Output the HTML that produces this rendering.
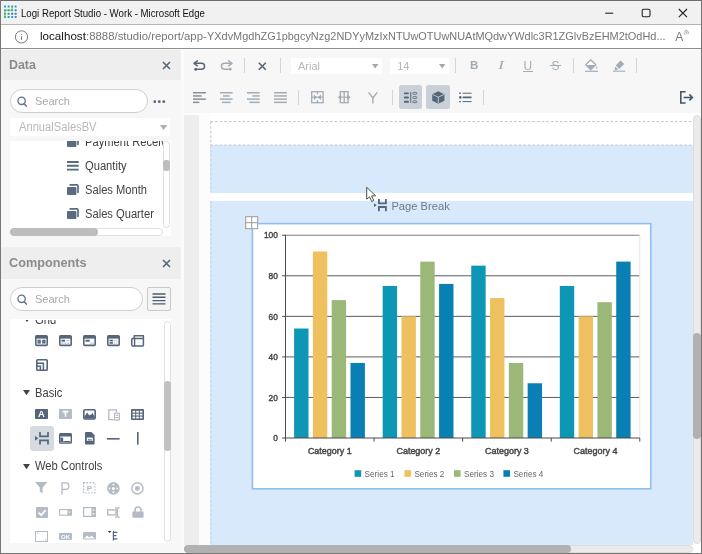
<!DOCTYPE html>
<html lang="en">
<head>
<meta charset="utf-8">
<title>Logi Report Studio - Work</title>
<style>
*{box-sizing:border-box;margin:0;padding:0}
html,body{width:702px;height:554px;overflow:hidden;background:#f7f7f7;font-family:"Liberation Sans",sans-serif;}
.a{position:absolute}
#win{position:absolute;left:0;top:0;width:702px;height:554px;overflow:hidden;will-change:transform}
.t{position:absolute;white-space:nowrap;line-height:1}
.tr{font-size:12px;color:#414141;transform-origin:0 0;transform:scaleX(.93)}
svg{position:absolute;overflow:visible}
</style>
</head>
<body>
<div id="win">
<!-- TITLE BAR -->
<div class="a" id="titlebar" style="left:0;top:0;width:702px;height:25px;background:#f1f1f1"></div>
<svg style="left:0;top:0" width="24" height="24" viewBox="0 0 24 24"><rect x="3.4" y="5" width="13.8" height="13.6" rx="2" fill="#e6f6fb"/><path d="M5.0 10.2H12.1M12.1 6.5V10.2M5.0 10.2V17.1" stroke="#8fd49a" stroke-width="1.4" fill="none"/><rect x="4.00" y="5.50" width="2" height="2" rx=".5" fill="#3f8fc6"/><rect x="7.60" y="5.50" width="2" height="2" rx=".5" fill="#3f8fc6"/><rect x="11.10" y="5.50" width="2" height="2" rx=".5" fill="#55a85e"/><rect x="14.60" y="5.50" width="2" height="2" rx=".5" fill="#3f8fc6"/><rect x="4.00" y="9.20" width="2" height="2" rx=".5" fill="#55a85e"/><rect x="7.60" y="9.20" width="2" height="2" rx=".5" fill="#55a85e"/><rect x="11.10" y="9.20" width="2" height="2" rx=".5" fill="#55a85e"/><rect x="14.60" y="9.20" width="2" height="2" rx=".5" fill="#517fa6"/><rect x="4.00" y="12.80" width="2" height="2" rx=".5" fill="#55a85e"/><rect x="7.60" y="12.80" width="2" height="2" rx=".5" fill="#3f8fc6"/><rect x="11.10" y="12.80" width="2" height="2" rx=".5" fill="#4a74b8"/><rect x="14.60" y="12.80" width="2" height="2" rx=".5" fill="#517fa6"/><rect x="4.00" y="16.10" width="2" height="2" rx=".5" fill="#55a85e"/><rect x="7.60" y="16.10" width="2" height="2" rx=".5" fill="#2f9a9a"/><rect x="11.10" y="16.10" width="2" height="2" rx=".5" fill="#3f8fc6"/><rect x="14.60" y="16.10" width="2" height="2" rx=".5" fill="#3f8fc6"/></svg>
<div class="t" id="ttl" style="left:21px;top:7.5px;font-size:10.5px;color:#111;transform-origin:0 0;transform:scaleX(.92)">Logi Report Studio - Work - Microsoft Edge</div>
<!-- window controls -->
<svg style="left:600px;top:0" width="102" height="25" viewBox="0 0 102 25">
<path d="M5.2 13.2h8" stroke="#222" stroke-width="1.1" fill="none"/>
<rect x="42.2" y="9.2" width="7.8" height="7.6" rx="1.5" stroke="#222" stroke-width="1.1" fill="none"/>
<path d="M78.800 9l8.200 8.200M87 9l-8.200 8.200" stroke="#222" stroke-width="1.1" fill="none"/>
</svg>
<!-- ADDRESS BAR -->
<div class="a" id="addr" style="left:0;top:24.2px;width:702px;height:24.6px;background:#fff;border-top:.9px solid #b4b4b4;border-bottom:1.1px solid #8e8e8e"></div>
<svg style="left:14px;top:30px" width="15" height="15" viewBox="0 0 15 15">
<circle cx="7.5" cy="6.900" r="6.100" stroke="#6a6a6a" stroke-width="0.9" fill="none"/>
<path d="M7.5 6.3v3.6" stroke="#777" stroke-width="1"/><circle cx="7.5" cy="4.5" r="0.6" fill="#777"/>
</svg>
<div class="t" id="u1" style="left:40px;top:31px;font-size:11.5px;color:#111;transform-origin:0 0;transform:scaleX(1.0110)">localhost</div>
<div class="t" id="u2" style="left:86.2px;top:31px;font-size:11.5px;color:#767676;transform-origin:0 0;transform:scaleX(0.9894)">:8888/studio/report/app-</div>
<div class="t" id="u3" style="left:207px;top:31px;font-size:11.5px;color:#767676;transform-origin:0 0;transform:scaleX(0.9503)">YXdvMgdhZG1pbgcyNzg2NDYyMzIxNTUwOTUwNUAtMQdwYWdlc3R1ZGlvBzEHM2tOdHd...</div>
<div class="t" style="left:675.2px;top:30.6px;font-size:12px;color:#7a7a7a">A</div>
<svg style="left:683px;top:30px" width="6" height="8" viewBox="0 0 6 8"><path d="M0.600 2.800q1.300 .4 1.500 1.800M1.400 1.200q2.400 .6 2.700 3M2.200 -0.200q3.300 .7 3.500 3.900" stroke="#7a7a7a" stroke-width=".7" fill="none"/></svg>
<!-- LEFT PANEL -->
<div class="a" id="left" style="left:1px;top:48.8px;width:179.5px;height:505px;background:#f7f7f7"></div>
<div class="a" style="left:1px;top:49.8px;width:179.5px;height:30.700px;background:#eeeeee;border-radius:3px 3px 0 0"></div>
<div class="t" id="hdata" style="left:9px;top:58px;font-size:13px;font-weight:bold;color:#8b8b8b;transform-origin:0 0;transform:scaleX(.955)">Data</div>
<svg style="left:162px;top:61px" width="9" height="9" viewBox="0 0 9 9"><path d="M1 1l7 7M8 1l-7 7" stroke="#55667a" stroke-width="1.6" fill="none"/></svg>
<div class="a" style="left:10px;top:89px;width:138px;height:24px;background:#fff;border:1px solid #cfcfcf;border-radius:12px"></div>
<svg style="left:17.4px;top:96px" width="11" height="12" viewBox="0 0 11 12"><circle cx="4.6" cy="4.8" r="3.7" stroke="#64748a" stroke-width="1.3" fill="none"/><path d="M7.2 7.700l2.100 2.400" stroke="#64748a" stroke-width="1.5" stroke-linecap="round"/></svg>
<div class="t" style="left:35px;top:96px;font-size:11px;color:#a9a9a9">Search</div>
<svg style="left:153px;top:100px" width="13" height="4" viewBox="0 0 13 4"><circle cx="1.8" cy="1.7" r="1.4" fill="#55667a"/><circle cx="6.3" cy="1.7" r="1.4" fill="#55667a"/><circle cx="10.8" cy="1.7" r="1.4" fill="#55667a"/></svg>
<div class="a" style="left:10.4px;top:118.2px;width:160px;height:18px;background:#fff"></div>
<div class="t" id="ddl" style="left:19px;top:121px;font-size:12px;color:#b9b9b9;transform-origin:0 0;transform:scaleX(.93)">AnnualSalesBV</div>
<svg style="left:159.6px;top:125px" width="8" height="5" viewBox="0 0 8 5"><path d="M0 0h7.2l-3.6 5z" fill="#a8b0b9"/></svg>
<!-- data tree -->
<div class="a" style="left:10.4px;top:141.2px;width:160.2px;height:95px;background:#fff;overflow:hidden">
  <div class="t tr" style="left:74.6px;top:-5.2px">Payment Received</div>
  <div class="t tr" style="left:74.6px;top:18.8px">Quantity</div>
  <div class="t tr" style="left:74.6px;top:42.8px">Sales Month</div>
  <div class="t tr" style="left:74.6px;top:66.8px">Sales Quarter</div>
  <svg style="left:56.6px;top:-4.800px" width="12" height="12" viewBox="0 0 12 12"><use href="#cube"/></svg>
  <svg style="left:56.6px;top:19.800px" width="12" height="11" viewBox="0 0 12 11"><path d="M0 1h11.700M0 4.800h11.700M0 8.600h11.700" stroke="#5a6b7f" stroke-width="1.900"/></svg>
  <svg style="left:56.6px;top:43px" width="12" height="12" viewBox="0 0 12 12"><use href="#cube"/></svg>
  <svg style="left:56.6px;top:67px" width="12" height="12" viewBox="0 0 12 12"><use href="#cube"/></svg>
  <!-- v scroll -->
  <div class="a" style="left:152.4px;top:0;width:8px;height:87px;background:#fff"></div>
  <div class="a" style="left:152.6px;top:0;width:7.4px;height:86.800px;background:#fff;border:1px solid #dedede;border-radius:4px"></div>
  <div class="a" style="left:152.6px;top:18.800px;width:7.4px;height:11px;background:#bdbdbd;border-radius:3px"></div>
  <!-- h scroll -->
  <div class="a" style="left:0;top:86.800px;width:152.600px;height:7.600px;background:#fff;border:1px solid #e1e1e1;border-radius:4px"></div>
  <div class="a" style="left:0;top:86.800px;width:87.600px;height:7.600px;background:#bdbdbd;border-radius:4px"></div>
</div>
<svg width="0" height="0" style="left:0;top:0"><defs><g id="cube"><path d="M3.200 0.900h6.800a1 1 0 0 1 1 1v6.400" stroke="#5a6b7f" stroke-width="1.700" fill="none" stroke-linecap="round"/><rect x="0" y="3" width="9.400" height="8" rx="1" fill="#5a6b7f"/></g></defs></svg>
<!-- COMPONENTS PANEL -->
<div class="a" style="left:1px;top:247.2px;width:179.5px;height:31.6px;background:#eeeeee;border-radius:3px 3px 0 0"></div>
<div class="t" id="hcomp" style="left:9px;top:256px;font-size:13px;font-weight:bold;color:#8b8b8b;transform-origin:0 0;transform:scaleX(.975)">Components</div>
<svg style="left:162px;top:259px" width="9" height="9" viewBox="0 0 9 9"><path d="M1 1l7 7M8 1l-7 7" stroke="#55667a" stroke-width="1.6" fill="none"/></svg>
<div class="a" style="left:10px;top:287px;width:133px;height:24px;background:#fff;border:1px solid #cfcfcf;border-radius:12px"></div>
<svg style="left:17.4px;top:294px" width="11" height="12" viewBox="0 0 11 12"><circle cx="4.6" cy="4.8" r="3.7" stroke="#64748a" stroke-width="1.3" fill="none"/><path d="M7.2 7.700l2.100 2.400" stroke="#64748a" stroke-width="1.5" stroke-linecap="round"/></svg>
<div class="t" style="left:35px;top:294px;font-size:11px;color:#a9a9a9">Search</div>
<div class="a" style="left:147px;top:287px;width:24px;height:24px;background:#f4f4f4;border:1px solid #c9c9c9;border-radius:2px"></div>
<svg style="left:152px;top:293px" width="14" height="12" viewBox="0 0 14 12"><path d="M0.5 1h13M0.5 4.3h13M0.5 7.6h13M0.5 10.9h13" stroke="#4c5c6e" stroke-width="1.4"/></svg>
<div class="a" style="left:10px;top:319.300px;width:161px;height:1.500px;background:#fff"></div>
<div class="a" id="ctree" style="left:10px;top:320px;width:161px;height:223px;background:#fff;overflow:hidden">
<div class="t tr" style="left:24.8px;top:-6px">Grid</div>
<svg style="left:14px;top:-1px" width="6" height="4" viewBox="0 0 6 4"><path d="M0 -1h6l-3 4z" fill="#444"/></svg>
<svg style="left:25px;top:15.2px" width="13" height="12" viewBox="0 0 13 12"><rect x="0.8" y="0.8" width="11.4" height="9.6" rx="0.9" fill="#fff" stroke="#55667a" stroke-width="1.6"/><rect x="0.8" y="0.8" width="11.4" height="2.8" fill="#55667a"/><rect x="2.5" y="4.700" width="3.3" height="3.900" fill="#55667a"/><rect x="7.200" y="4.700" width="3.300" height="3.900" fill="#55667a"/><path d="M2.500 6.650h8" stroke="#8d98a5" stroke-width=".5"/></svg>
<svg style="left:49px;top:15.2px" width="13" height="12" viewBox="0 0 13 12"><rect x="0.8" y="0.8" width="11.4" height="9.6" rx="0.9" fill="#fff" stroke="#55667a" stroke-width="1.6"/><rect x="0.8" y="0.8" width="11.4" height="2.8" fill="#55667a"/><rect x="2.5" y="4.700" width="3.600" height="2" fill="#55667a"/><rect x="7.400" y="5.200" width="3" height="1" fill="#b3bbc4"/><rect x="2.500" y="7.600" width="2" height="1.200" fill="#b3bbc4"/><rect x="5.400" y="7.600" width="2" height="1.200" fill="#b3bbc4"/><rect x="8.400" y="7.600" width="2" height="1.200" fill="#b3bbc4"/></svg>
<svg style="left:73px;top:15.2px" width="13" height="12" viewBox="0 0 13 12"><rect x="0.8" y="0.8" width="11.4" height="9.6" rx="0.9" fill="#fff" stroke="#55667a" stroke-width="1.6"/><rect x="0.8" y="0.8" width="11.4" height="2.8" fill="#55667a"/><rect x="2.5" y="4.700" width="4.200" height="2" fill="#55667a"/><rect x="7.400" y="7.400" width="1.200" height="1.400" fill="#b3bbc4"/><rect x="9.400" y="7.400" width="1.200" height="1.400" fill="#b3bbc4"/></svg>
<svg style="left:97px;top:15.2px" width="13" height="12" viewBox="0 0 13 12"><rect x="0.8" y="0.8" width="11.4" height="9.6" rx="0.9" fill="#fff" stroke="#55667a" stroke-width="1.6"/><rect x="0.8" y="0.8" width="11.4" height="2.8" fill="#55667a"/><rect x="2.5" y="4.700" width="3.400" height="1.700" fill="#55667a"/><rect x="2.500" y="7.100" width="3.400" height="1.700" fill="#55667a"/><rect x="7.200" y="5" width="1.200" height="1.100" fill="#b3bbc4"/><rect x="9.200" y="5" width="1.200" height="1.100" fill="#b3bbc4"/><rect x="7.200" y="7.400" width="1.200" height="1.100" fill="#b3bbc4"/><rect x="9.200" y="7.400" width="1.200" height="1.100" fill="#b3bbc4"/></svg>
<svg style="left:121px;top:15px" width="13" height="12" viewBox="0 0 13 12"><rect x="0.800" y="3.500" width="11.600" height="7.400" rx="0.800" fill="#fff" stroke="#55667a" stroke-width="1.500"/><path d="M3.200 3.500V0.800h9.200V3.500" stroke="#55667a" stroke-width="1.500" fill="none" stroke-linejoin="round"/><path d="M3.600 3.500v7.400" stroke="#55667a" stroke-width="1.400"/></svg>
<svg style="left:26px;top:39px" width="12" height="12" viewBox="0 0 12 12"><rect x="0.800" y="0.800" width="10.400" height="10.400" rx="0.800" fill="#fff" stroke="#55667a" stroke-width="1.600"/><path d="M1 4.200H7.400V11" stroke="#55667a" stroke-width="1.500" fill="none"/><path d="M1 7.300H4.400V11" stroke="#55667a" stroke-width="1.500" fill="none"/></svg>
<svg style="left:13.4px;top:70.3px" width="7" height="6" viewBox="0 0 7 6"><path d="M0 0h7l-3.5 5.2z" fill="#444"/></svg>
<div class="t tr" style="left:24.8px;top:67px">Basic</div>
<svg style="left:25px;top:89.4px" width="13" height="10" viewBox="0 0 13 10"><rect x="0" y="0" width="13" height="10" rx="0.8" fill="#55667a"/><text x="6.5" y="8.4" font-family="Liberation Sans,sans-serif" font-weight="bold" font-size="9.4" fill="#fff" text-anchor="middle">A</text></svg>
<svg style="left:49px;top:89.4px" width="13" height="10" viewBox="0 0 13 10"><rect x="0" y="0" width="13" height="10" rx="0.8" fill="#b3bbc4"/><path d="M3.6 2.6h5.8M6.5 2.6v5.2" stroke="#fff" stroke-width="1.6" fill="none"/></svg>
<svg style="left:73px;top:89.2px" width="13" height="11" viewBox="0 0 13 11"><rect x="0.8" y="0.8" width="11.4" height="9.2" rx="1.2" fill="#fff" stroke="#55667a" stroke-width="1.6"/><path d="M1.400 9.600V7.400L4.200 3.600l2 3 1-1.200.8.800 1.200-2.400 2.400 3.600v2.200z" fill="#55667a"/></svg>
<svg style="left:97.5px;top:88.6px" width="12" height="12" viewBox="0 0 12 12"><path d="M8.4 3V0.8H0.8v9.8h5" stroke="#b3bbc4" stroke-width="1.3" fill="none"/><rect x="6.6" y="4.2" width="4.8" height="7" rx="0.8" fill="#fff" stroke="#b3bbc4" stroke-width="1.2"/><path d="M7.6 6.2h2.8M7.6 8.6h2.8" stroke="#b3bbc4" stroke-width="1.1"/></svg>
<svg style="left:121px;top:89.2px" width="13" height="11" viewBox="0 0 13 11"><rect x="0" y="0" width="13" height="11" rx="1" fill="#55667a"/><g fill="#fff"><rect x="1.6" y="1.8" width="2.6" height="1.8"/><rect x="5.2" y="1.8" width="2.6" height="1.8"/><rect x="8.8" y="1.8" width="2.6" height="1.8"/><rect x="1.6" y="4.7" width="2.6" height="1.8"/><rect x="5.2" y="4.7" width="2.6" height="1.8"/><rect x="8.8" y="4.7" width="2.6" height="1.8"/><rect x="1.6" y="7.6" width="2.6" height="1.8"/><rect x="5.2" y="7.6" width="2.6" height="1.8"/><rect x="8.8" y="7.6" width="2.6" height="1.8"/></g></svg>
<div class="a" style="left:19.6px;top:106.4px;width:24px;height:24.4px;background:#d6dbe1;border-radius:3px"></div>
<svg style="left:24.8px;top:112px" width="14" height="13" viewBox="0 0 14 13"><path d="M0 3.900l3.400 2.400-3.400 2.400z" fill="#55667a"/><path d="M5 0v4.300h8V0M5 12.600V8.300h8v4.300" stroke="#55667a" stroke-width="1.7" fill="none"/></svg>
<svg style="left:49px;top:112.8px" width="13" height="11" viewBox="0 0 13 11"><rect x="0.7" y="0.7" width="11.6" height="9.4" rx="0.8" fill="#fff" stroke="#55667a" stroke-width="1.4"/><rect x="0.7" y="0.7" width="11.6" height="2.800" fill="#55667a"/><rect x="1.400" y="4.600" width="2.800" height="4.800" fill="#55667a"/><path d="M4.400 8.700h7" stroke="#55667a" stroke-width="1.400"/></svg>
<svg style="left:75px;top:112px" width="10" height="13" viewBox="0 0 10 13"><path d="M0 1a1 1 0 0 1 1-1h5.4L9.6 3.2V11.6a1 1 0 0 1-1 1H1a1 1 0 0 1-1-1z" fill="#55667a"/><rect x="1.8" y="5.6" width="6" height="3.4" fill="#fff"/><path d="M2.4 8.6l1.4-1.8 1.2 1 1-.8 1.4 1.6z" fill="#55667a"/></svg>
<svg style="left:97.2px;top:117.5px" width="13" height="2" viewBox="0 0 13 2"><rect x="0" y="0" width="12.6" height="1.6" fill="#55667a"/></svg>
<svg style="left:126.7px;top:112px" width="2" height="13" viewBox="0 0 2 13"><rect x="0" y="0" width="1.6" height="12.6" fill="#55667a"/></svg>
<svg style="left:13.4px;top:143.6px" width="7" height="6" viewBox="0 0 7 6"><path d="M0 0h7l-3.5 5.2z" fill="#444"/></svg>
<div class="t tr" style="left:24.8px;top:140px">Web Controls</div>
<svg style="left:25.4px;top:162.4px" width="13" height="12" viewBox="0 0 13 12"><path d="M0 0h12.4L7.6 5.4v5.8L4.8 9.4V5.4z" fill="#b3bbc4"/></svg>
<svg style="left:51px;top:161.5px" width="10" height="13" viewBox="0 0 10 13"><path d="M1 12.6V0.8h3.6a3.3 3.3 0 0 1 0 6.6H1" stroke="#b3bbc4" stroke-width="1.3" fill="none"/></svg>
<svg style="left:73.4px;top:162px" width="13" height="12" viewBox="0 0 13 12"><rect x="0.6" y="0.6" width="11.4" height="10.4" fill="none" stroke="#b3bbc4" stroke-width="1.1" stroke-dasharray="1.6 1.4"/><text x="6.4" y="9" font-family="Liberation Sans,sans-serif" font-weight="bold" font-size="8" fill="#b3bbc4" text-anchor="middle">P</text></svg>
<svg style="left:97.2px;top:161.6px" width="13" height="13" viewBox="0 0 13 13"><circle cx="6.4" cy="6.4" r="6.3" fill="#b3bbc4"/><circle cx="6.4" cy="6.4" r="1.5" fill="#fff"/><path d="M6.4 1.400l1.500 1.800H4.900zM6.400 11.400l1.500-1.800H4.900zM1.400 6.400l1.800-1.500v3zM11.400 6.400l-1.800-1.500v3z" fill="#fff"/></svg>
<svg style="left:121.2px;top:161.6px" width="13" height="13" viewBox="0 0 13 13"><circle cx="6.4" cy="6.4" r="5.6" fill="#fff" stroke="#b3bbc4" stroke-width="1.4"/><circle cx="6.4" cy="6.4" r="2.4" fill="#b3bbc4"/></svg>
<svg style="left:25.6px;top:187px" width="12" height="11" viewBox="0 0 12 11"><rect x="0" y="0" width="12" height="11" rx="1" fill="#b3bbc4"/><path d="M2.6 5.6l2.6 2.6 4.6-5" stroke="#fff" stroke-width="1.8" fill="none"/></svg>
<svg style="left:49px;top:188.6px" width="13" height="7" viewBox="0 0 13 7"><rect x="0.6" y="0.6" width="11.8" height="5.6" fill="#fff" stroke="#b3bbc4" stroke-width="1.1"/><rect x="8.4" y="0.6" width="4" height="5.6" fill="#b3bbc4"/><path d="M9.4 2.6h2l-1 1.6z" fill="#fff"/></svg>
<svg style="left:73.2px;top:187.4px" width="13" height="10" viewBox="0 0 13 10"><rect x="0.6" y="0.6" width="11.8" height="8.8" fill="#fff" stroke="#b3bbc4" stroke-width="1.2"/><rect x="8.4" y="0.6" width="4" height="8.8" fill="#b3bbc4"/><path d="M9.6 3h1.8M9.6 6.8h1.8" stroke="#fff" stroke-width="1.2"/></svg>
<svg style="left:97.2px;top:187px" width="13" height="11" viewBox="0 0 13 11"><rect x="0.7" y="2.900" width="8.400" height="5" fill="#fff" stroke="#b3bbc4" stroke-width="1.400"/><path d="M8.200 0.700h1.600M11 0.700h1.600M10.400 0.700v9.600M8.200 10.300h1.600M11 10.300h1.600" stroke="#b3bbc4" stroke-width="1.400" fill="none"/></svg>
<svg style="left:122px;top:186.4px" width="12" height="12" viewBox="0 0 12 12"><path d="M3 6V4a3 3 0 0 1 6 0v2" stroke="#b3bbc4" stroke-width="1.6" fill="none"/><rect x="0.4" y="5.6" width="11.2" height="6.2" rx="0.8" fill="#b3bbc4"/></svg>
<svg style="left:25px;top:211px" width="13" height="11" viewBox="0 0 13 11"><rect x="0.5" y="0.5" width="12" height="10" fill="#fff" stroke="#b3bbc4" stroke-width="1"/><path d="M2 2.2h1.4M10 8.8h1.4" stroke="#b3bbc4" stroke-width="1"/></svg>
<svg style="left:49px;top:212.6px" width="13" height="7" viewBox="0 0 13 7"><rect x="0" y="0" width="13" height="7" rx="1" fill="#b3bbc4"/><text x="6.5" y="5.8" font-family="Liberation Sans,sans-serif" font-weight="bold" font-size="6" fill="#fff" text-anchor="middle">OK</text></svg>
<svg style="left:73px;top:212.4px" width="13" height="8" viewBox="0 0 13 8"><rect x="0" y="0" width="13" height="7.6" rx="0.8" fill="#b3bbc4"/><path d="M1 6.4l3-3 2.4 2 2-1.6 3.6 2.6z" fill="#fff"/></svg>
<svg style="left:97.8px;top:211.4px" width="10" height="10" viewBox="0 0 10 10"><path d="M0 0h3.4l-1.7 2z" fill="#333"/><path d="M5.4 0v9.4M5.4 1.4h4M5.4 4.6h3M5.4 7.8h4" stroke="#55667a" stroke-width="1.2" fill="none"/></svg>
<div class="a" style="left:153.5px;top:1px;width:7.5px;height:221px;background:#fff;border:1px solid #e1e1e1;border-radius:4px"></div>
<div class="a" style="left:153.5px;top:60.8px;width:7.5px;height:70px;background:#c1c1c1;border-radius:4px"></div>
</div>
<!-- TOOLBAR -->
<div class="a" style="left:180.5px;top:48.8px;width:3px;height:505px;background:#fbfbfb"></div>
<div class="a" style="left:183.5px;top:48.8px;width:518.5px;height:3px;background:#fafafa"></div>
<div class="a" id="toolbar" style="left:183.5px;top:50.6px;width:518.5px;height:61.9px;background:#f7f7f7;border-radius:3px 0 0 0"></div>
<svg style="left:192.8px;top:59.8px" width="13" height="12" viewBox="0 0 13 12"><path d="M4.4 0.8L1 3.300l3.400 2.500" stroke="#55667a" stroke-width="1.5" fill="none" stroke-linejoin="round" stroke-linecap="round"/><path d="M1.2 3.3H8.6a2.950 2.950 0 0 1 0 5.900H4.2" stroke="#55667a" stroke-width="1.5" fill="none"/><circle cx="2.800" cy="9.200" r="1.5" fill="#55667a"/></svg>
<svg style="left:220px;top:59.8px;transform:scaleX(-1)" width="13" height="12" viewBox="0 0 13 12"><path d="M4.4 0.8L1 3.300l3.400 2.500" stroke="#a3acb6" stroke-width="1.5" fill="none" stroke-linejoin="round" stroke-linecap="round"/><path d="M1.2 3.3H8.6a2.950 2.950 0 0 1 0 5.900H4.2" stroke="#a3acb6" stroke-width="1.5" fill="none"/><circle cx="2.800" cy="9.200" r="1.4" fill="#a3acb6"/></svg>
<div class="a" style="left:244px;top:58px;width:1px;height:15px;background:#d4d4d4"></div>
<svg style="left:258.4px;top:61.6px" width="9" height="9" viewBox="0 0 9 9"><path d="M0.8 0.8l7 7M7.8 0.8l-7 7" stroke="#55667a" stroke-width="1.6" fill="none"/></svg>
<div class="a" style="left:280px;top:58px;width:1px;height:15px;background:#d4d4d4"></div>
<div class="a" style="left:290.8px;top:57.5px;width:91px;height:16.5px;background:#fff"></div>
<div class="t" id="tarial" style="left:298px;top:60.6px;font-size:11px;color:#b7b7b7">Arial</div>
<svg style="left:371.5px;top:64.2px" width="7" height="5" viewBox="0 0 7 5"><path d="M0 0h6.4l-3.2 4.4z" fill="#a0a8b2"/></svg>
<div class="a" style="left:390px;top:57.5px;width:59.4px;height:16.5px;background:#fff"></div>
<div class="t" id="t14" style="left:397.2px;top:60.6px;font-size:11px;color:#b7b7b7">14</div>
<svg style="left:438.8px;top:64.2px" width="7" height="5" viewBox="0 0 7 5"><path d="M0 0h6.4l-3.2 4.4z" fill="#a0a8b2"/></svg>
<div class="a" style="left:455px;top:58px;width:1px;height:15px;background:#d4d4d4"></div>
<div class="t" style="left:470px;top:60px;font-size:11.5px;font-weight:bold;color:#a3acb6">B</div>
<div class="t" style="left:497.6px;top:59.2px;font-size:12.5px;font-style:italic;font-family:'Liberation Serif',serif;color:#a3acb6;transform-origin:0 0;transform:scaleX(1.45)">I</div>
<div class="t" style="left:523.6px;top:60px;font-size:12px;color:#a3acb6">U</div>
<div class="a" style="left:523.4px;top:71.4px;width:9.4px;height:1px;background:#a3acb6"></div>
<div class="t" style="left:551.6px;top:60px;font-size:12px;color:#a3acb6">S</div>
<div class="a" style="left:550px;top:65.4px;width:11.4px;height:1px;background:#a3acb6"></div>
<div class="a" style="left:573px;top:58px;width:1px;height:15px;background:#d4d4d4"></div>
<svg style="left:585px;top:59px" width="13" height="13" viewBox="0 0 13 13"><path d="M5.800 0.700L0.800 5.700 5.800 10.700 10.800 5.700z" fill="#fff" stroke="#a3acb6" stroke-width="1.300" stroke-linejoin="round"/><path d="M1.200 5.900h9.200L5.800 10.600z" fill="#a3acb6"/><path d="M11.800 7q1.500 2 0 3q-1.500-1 0-3z" fill="#a3acb6"/><path d="M0 12.300h13" stroke="#a3acb6" stroke-width="1.200"/></svg>
<svg style="left:612.6px;top:59.6px" width="13" height="12" viewBox="0 0 13 12"><path d="M7.6 0.6l3.6 3.4-5 5-3.4-3.4z" fill="#a3acb6"/><path d="M2.2 6.4l3 3-3.6 1z" fill="#a3acb6"/><path d="M0 11.200h12.200" stroke="#a3acb6" stroke-width="1.1"/></svg>
<div class="a" style="left:636px;top:58px;width:1px;height:15px;background:#d4d4d4"></div>
<svg style="left:192.8px;top:91.8px" width="13" height="11" viewBox="0 0 13 11"><rect x="0" y="0" width="12.9" height="1.5" fill="#85909c"/><rect x="0" y="3.2" width="8.6" height="1.5" fill="#85909c"/><rect x="0" y="6.4" width="12.9" height="1.5" fill="#85909c"/><rect x="0" y="9.6" width="6.3" height="1.5" fill="#85909c"/></svg>
<svg style="left:220.3px;top:91.8px" width="13" height="11" viewBox="0 0 13 11"><rect x="0" y="0" width="12.6" height="1.5" fill="#a3acb6"/><rect x="3" y="3.2" width="6.6" height="1.5" fill="#a3acb6"/><rect x="0" y="6.4" width="12.6" height="1.5" fill="#a3acb6"/><rect x="2" y="9.6" width="8.6" height="1.5" fill="#a3acb6"/></svg>
<svg style="left:247.2px;top:91.8px" width="13" height="11" viewBox="0 0 13 11"><rect x="0" y="0" width="12.7" height="1.5" fill="#a3acb6"/><rect x="5.4" y="3.2" width="7.3" height="1.5" fill="#a3acb6"/><rect x="0" y="6.4" width="12.7" height="1.5" fill="#a3acb6"/><rect x="2.4" y="9.6" width="10.3" height="1.5" fill="#a3acb6"/></svg>
<svg style="left:274.3px;top:91.8px" width="13" height="11" viewBox="0 0 13 11"><rect x="0" y="0" width="12.9" height="1.5" fill="#a3acb6"/><rect x="0" y="3.2" width="12.9" height="1.5" fill="#a3acb6"/><rect x="0" y="6.4" width="12.9" height="1.5" fill="#a3acb6"/><rect x="0" y="9.6" width="12.9" height="1.5" fill="#a3acb6"/></svg>
<div class="a" style="left:298px;top:90px;width:1px;height:15px;background:#d4d4d4"></div>
<svg style="left:310.5px;top:91px" width="13" height="13" viewBox="0 0 13 13"><rect x="0.700" y="0.700" width="11.400" height="11" fill="none" stroke="#a3acb6" stroke-width="1.300"/><path d="M6.400 0.700v2.600M6.400 9.100v2.600" stroke="#a3acb6" stroke-width="1.300"/><path d="M1 6.200h11" stroke="#a3acb6" stroke-width="1.100"/><path d="M6.200 6.200L2.800 3.400v5.600zM6.600 6.200l3.400-2.800v5.600z" fill="#a3acb6"/></svg>
<svg style="left:338.2px;top:91px" width="13" height="13" viewBox="0 0 13 13"><rect x="2.300" y="0.700" width="7.800" height="11" fill="none" stroke="#a3acb6" stroke-width="1.300"/><path d="M6.200 0.700v11" stroke="#a3acb6" stroke-width="1.300"/><path d="M2 6.200h8.400" stroke="#a3acb6" stroke-width="1.100"/><path d="M-0.200 6.200l3.400-2.900v5.800zM12.600 6.200l-3.400-2.900v5.800z" fill="#a3acb6"/></svg>
<svg style="left:368.2px;top:92px" width="10" height="12" viewBox="0 0 10 12"><path d="M0.6 0.4L4.9 6 9.2 0.4M4.9 5.6v5.8" stroke="#a3acb6" stroke-width="1.4" fill="none"/></svg>
<div class="a" style="left:392px;top:90px;width:1px;height:15px;background:#d4d4d4"></div>
<div class="a" style="left:399.1px;top:85.4px;width:23.2px;height:23.2px;background:#cad0d7;border-radius:2.5px"></div>
<div class="a" style="left:426.2px;top:85.4px;width:23.4px;height:23.2px;background:#cad0d7;border-radius:2.5px"></div>
<svg style="left:404px;top:92px" width="13" height="11" viewBox="0 0 13 11"><rect x="0" y="0.4" width="4.8" height="1.9" rx=".5" fill="#55667a"/><rect x="0" y="4.6" width="4.8" height="1.9" rx=".5" fill="#55667a"/><rect x="0" y="8.8" width="4.8" height="1.9" rx=".5" fill="#55667a"/><path d="M6.8 0v11" stroke="#55667a" stroke-width="1"/><rect x="8.8" y="0.4" width="4" height="1.9" rx=".8" fill="none" stroke="#55667a" stroke-width=".8"/><rect x="8.8" y="4.6" width="4" height="1.9" rx=".8" fill="none" stroke="#55667a" stroke-width=".8"/><rect x="8.8" y="8.8" width="4" height="1.9" rx=".8" fill="none" stroke="#55667a" stroke-width=".8"/></svg>
<svg style="left:431.6px;top:90.8px" width="13" height="13" viewBox="0 0 13 13"><path d="M6.3 0.2L12.4 3.2v6.6L6.3 12.8 0.2 9.800V3.2z" fill="#55667a"/><path d="M0.6 3.4l5.7 2.8 5.7-2.8M6.3 6.2v6.4" stroke="#cad0d7" stroke-width=".9" fill="none"/></svg>
<svg style="left:459px;top:92px" width="13" height="11" viewBox="0 0 13 11"><circle cx="1" cy="1.2" r="0.9" fill="#55667a"/><rect x="3.6" y="0.7" width="9" height="1" fill="#55667a"/><circle cx="1.3" cy="5.4" r="1.3" fill="#55667a"/><rect x="3.6" y="4.5" width="9" height="1.8" rx=".5" fill="#55667a"/><circle cx="1" cy="9.6" r="0.9" fill="#55667a"/><rect x="3.6" y="9.1" width="9" height="1" fill="#55667a"/></svg>
<div class="a" style="left:483px;top:90px;width:1px;height:15px;background:#d4d4d4"></div>
<svg style="left:680.2px;top:90.8px" width="14" height="13" viewBox="0 0 14 13"><path d="M5.6 0.8H0.8v11.2h4.8" stroke="#45566a" stroke-width="1.6" fill="none"/><path d="M3.6 6.4h8.6M9.4 3.4l3 3-3 3" stroke="#45566a" stroke-width="1.5" fill="none"/></svg>
<!-- CANVAS -->
<div class="a" id="canvas" style="left:183.5px;top:112.5px;width:510px;height:432.5px;background:#fcfcfc;overflow:hidden"></div>
<div class="a" style="left:183.5px;top:115px;width:15.8px;height:430px;background:#ededed"></div>
<div class="a" style="left:210.4px;top:112.5px;width:483px;height:33px;background:#fff"></div>
<div class="a" style="left:210.4px;top:145.2px;width:483px;height:47.7px;background:#d9e9fc"></div>
<div class="a" style="left:210.4px;top:192.9px;width:483px;height:7.9px;background:#fefefe"></div>
<div class="a" style="left:210.4px;top:200.8px;width:483px;height:344.2px;background:#d9e9fc"></div>
<svg style="left:0;top:0" width="702" height="554" viewBox="0 0 702 554">
<g stroke="#c4c4c4" stroke-width="1" fill="none" stroke-dasharray="2.6 2">
<path d="M210.4 121.6H693.4"/><path d="M210.4 145.1H693.4"/><path d="M210.8 121.6V145"/>
</g>
<g stroke="#c3d3e6" stroke-width="1" fill="none" stroke-dasharray="2.6 2"><path d="M210.9 145V192.4M210.9 200.8V545"/></g>
<rect x="252.4" y="223.6" width="398.4" height="265.2" fill="#fff" stroke="#90bef0" stroke-width="1.6"/>
<rect x="245.7" y="216.7" width="12" height="12" fill="#fff" stroke="#9a9a9a" stroke-width="1"/><path d="M251.7 216.7v12M245.7 222.7h12" stroke="#9a9a9a" stroke-width="1"/>
<path d="M285.5 397.45H639.8" stroke="#5c5c5c" stroke-width="1"/>
<path d="M285.5 356.90H639.8" stroke="#5c5c5c" stroke-width="1"/>
<path d="M285.5 316.35H639.8" stroke="#5c5c5c" stroke-width="1"/>
<path d="M285.5 275.80H639.8" stroke="#5c5c5c" stroke-width="1"/>
<path d="M285.5 235.25H639.8" stroke="#808080" stroke-width="1.1"/>
<path d="M639.8 235.25V438.0" stroke="#e4e4e4" stroke-width="1"/>
<rect x="294.10" y="328.51" width="14.4" height="109.48" fill="#0d97b5"/>
<rect x="312.90" y="251.47" width="14.4" height="186.53" fill="#eec05f"/>
<rect x="331.70" y="300.13" width="14.4" height="137.87" fill="#9cb878"/>
<rect x="350.50" y="362.98" width="14.4" height="75.02" fill="#0a7fb4"/>
<rect x="382.68" y="285.94" width="14.4" height="152.06" fill="#0d97b5"/>
<rect x="401.48" y="316.35" width="14.4" height="121.65" fill="#eec05f"/>
<rect x="420.28" y="261.61" width="14.4" height="176.39" fill="#9cb878"/>
<rect x="439.08" y="283.91" width="14.4" height="154.09" fill="#0a7fb4"/>
<rect x="471.25" y="265.66" width="14.4" height="172.34" fill="#0d97b5"/>
<rect x="490.05" y="298.10" width="14.4" height="139.90" fill="#eec05f"/>
<rect x="508.85" y="362.98" width="14.4" height="75.02" fill="#9cb878"/>
<rect x="527.65" y="383.26" width="14.4" height="54.74" fill="#0a7fb4"/>
<rect x="559.82" y="285.94" width="14.4" height="152.06" fill="#0d97b5"/>
<rect x="578.62" y="316.35" width="14.4" height="121.65" fill="#eec05f"/>
<rect x="597.42" y="302.16" width="14.4" height="135.84" fill="#9cb878"/>
<rect x="616.22" y="261.61" width="14.4" height="176.39" fill="#0a7fb4"/>
<path d="M285.5 234.75V441.6" stroke="#4a4a4a" stroke-width="1"/>
<path d="M282.1 438.0H639.8" stroke="#4a4a4a" stroke-width="1.2"/>
<path d="M282.1 397.45H285.5" stroke="#4a4a4a" stroke-width="1"/>
<path d="M282.1 356.90H285.5" stroke="#4a4a4a" stroke-width="1"/>
<path d="M282.1 316.35H285.5" stroke="#4a4a4a" stroke-width="1"/>
<path d="M282.1 275.80H285.5" stroke="#4a4a4a" stroke-width="1"/>
<path d="M282.1 235.25H285.5" stroke="#4a4a4a" stroke-width="1"/>
<path d="M374.07 438.0V441.6" stroke="#4a4a4a" stroke-width="1"/>
<path d="M462.65 438.0V441.6" stroke="#4a4a4a" stroke-width="1"/>
<path d="M551.22 438.0V441.6" stroke="#4a4a4a" stroke-width="1"/>
<path d="M639.80 438.0V441.6" stroke="#4a4a4a" stroke-width="1"/>
<text x="273.25" y="441.20" font-family="Liberation Sans, sans-serif" font-size="8.8" fill="#444" stroke="#444" stroke-width="0.4" textLength="4.65" lengthAdjust="spacingAndGlyphs">0</text>
<text x="268.60" y="400.65" font-family="Liberation Sans, sans-serif" font-size="8.8" fill="#444" stroke="#444" stroke-width="0.4" textLength="9.30" lengthAdjust="spacingAndGlyphs">20</text>
<text x="268.60" y="360.10" font-family="Liberation Sans, sans-serif" font-size="8.8" fill="#444" stroke="#444" stroke-width="0.4" textLength="9.30" lengthAdjust="spacingAndGlyphs">40</text>
<text x="268.60" y="319.55" font-family="Liberation Sans, sans-serif" font-size="8.8" fill="#444" stroke="#444" stroke-width="0.4" textLength="9.30" lengthAdjust="spacingAndGlyphs">60</text>
<text x="268.60" y="279.00" font-family="Liberation Sans, sans-serif" font-size="8.8" fill="#444" stroke="#444" stroke-width="0.4" textLength="9.30" lengthAdjust="spacingAndGlyphs">80</text>
<text x="263.95" y="238.45" font-family="Liberation Sans, sans-serif" font-size="8.8" fill="#444" stroke="#444" stroke-width="0.4" textLength="13.95" lengthAdjust="spacingAndGlyphs">100</text>
<text x="307.89" y="453.6" font-family="Liberation Sans, sans-serif" font-size="9.5" fill="#4a4a4a" stroke="#4a4a4a" stroke-width="0.5" textLength="43.8" lengthAdjust="spacingAndGlyphs">Category 1</text>
<text x="396.46" y="453.6" font-family="Liberation Sans, sans-serif" font-size="9.5" fill="#4a4a4a" stroke="#4a4a4a" stroke-width="0.5" textLength="43.8" lengthAdjust="spacingAndGlyphs">Category 2</text>
<text x="485.04" y="453.6" font-family="Liberation Sans, sans-serif" font-size="9.5" fill="#4a4a4a" stroke="#4a4a4a" stroke-width="0.5" textLength="43.8" lengthAdjust="spacingAndGlyphs">Category 3</text>
<text x="573.61" y="453.6" font-family="Liberation Sans, sans-serif" font-size="9.5" fill="#4a4a4a" stroke="#4a4a4a" stroke-width="0.5" textLength="43.8" lengthAdjust="spacingAndGlyphs">Category 4</text>
<rect x="354.6" y="470.2" width="6.6" height="6.6" fill="#0d97b5"/>
<text x="364.6" y="476.7" font-family="Liberation Sans, sans-serif" font-size="9" fill="#666" textLength="30" lengthAdjust="spacingAndGlyphs">Series 1</text>
<rect x="404.4" y="470.2" width="6.6" height="6.6" fill="#eec05f"/>
<text x="414.4" y="476.7" font-family="Liberation Sans, sans-serif" font-size="9" fill="#666" textLength="30" lengthAdjust="spacingAndGlyphs">Series 2</text>
<rect x="454.0" y="470.2" width="6.6" height="6.6" fill="#9cb878"/>
<text x="464.0" y="476.7" font-family="Liberation Sans, sans-serif" font-size="9" fill="#666" textLength="30" lengthAdjust="spacingAndGlyphs">Series 3</text>
<rect x="503.4" y="470.2" width="6.6" height="6.6" fill="#0a7fb4"/>
<text x="513.4" y="476.7" font-family="Liberation Sans, sans-serif" font-size="9" fill="#666" textLength="30" lengthAdjust="spacingAndGlyphs">Series 4</text>
<g transform="translate(373.8 199.1)"><path d="M0.200 4.200l2.600 1.900-2.600 1.900z" fill="#55667a"/><path d="M5.100 0v4.300h7V0M5.100 12.200V7.900h7v4.300" stroke="#55667a" stroke-width="1.800" fill="none"/></g>
<text x="391.4" y="209.8" font-family="Liberation Sans, sans-serif" font-size="11" fill="#6d7a88" textLength="58.4" lengthAdjust="spacingAndGlyphs">Page Break</text>
<path d="M366.700 187.300v11.900l2.800-2.400 2.200 4.700 2.100-1-2.200-4.600 4-.100z" fill="#fff" stroke="#4d4d4d" stroke-width="1" stroke-linejoin="round"/>
</svg>
<div class="a" style="left:693.4px;top:112.5px;width:8px;height:441px;background:#fff"></div>
<div class="a" style="left:693.4px;top:115px;width:7.2px;height:429px;background:#ebebeb;border:1px solid #dcdcdc;border-radius:4px"></div>
<div class="a" style="left:693.4px;top:332.5px;width:7.2px;height:106.5px;background:#b1b1b1;border-radius:4px"></div>
<div class="a" style="left:183.5px;top:545px;width:510px;height:8.5px;background:#fff"></div>
<div class="a" style="left:183.5px;top:545.3px;width:509px;height:7.4px;background:#ebebeb;border:1px solid #dcdcdc;border-radius:4px"></div>
<div class="a" style="left:183.5px;top:545.3px;width:387.6px;height:7.4px;background:#b1b1b1;border-radius:4px"></div>
<div class="a" style="left:0;top:0;width:702px;height:1px;background:#6c6c6c"></div>
<div class="a" style="left:0;top:0;width:1px;height:554px;background:#777"></div>
<div class="a" style="left:700.7px;top:0;width:1.3px;height:554px;background:#747474"></div>
<div class="a" style="left:0;top:552.6px;width:702px;height:1.4px;background:#777"></div>
</div>
</body>
</html>
